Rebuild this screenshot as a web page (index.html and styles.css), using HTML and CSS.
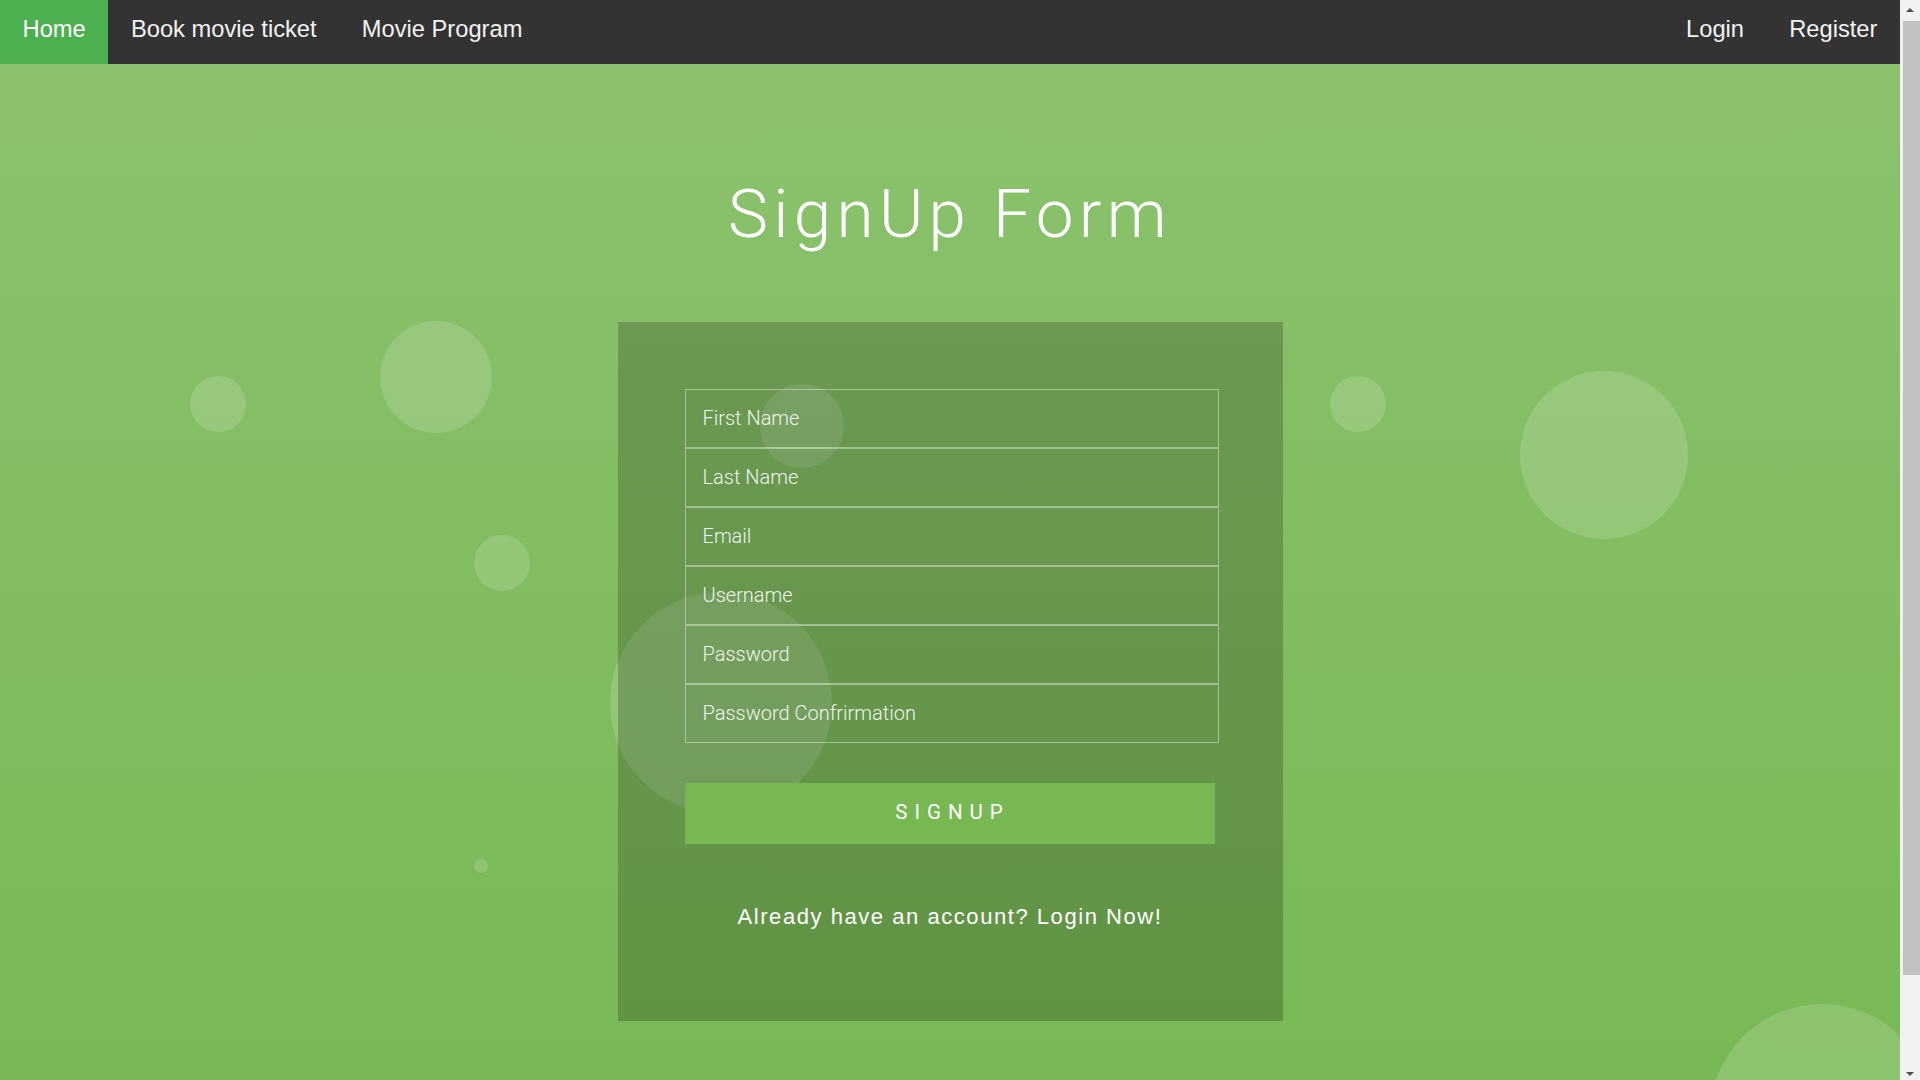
FILE: index.html
```html
<!DOCTYPE html>
<html lang="en">
<head>
<meta charset="utf-8">
<title>SignUp Form</title>
<link rel="stylesheet" href="styles.css">
</head>
<body>
<div class="viewport">
  <div class="doc">
    <nav class="topnav">
      <a class="nav-link active" href="#">Home</a>
      <a class="nav-link" href="#">Book movie ticket</a>
      <a class="nav-link" href="#">Movie Program</a>
      <div class="nav-right">
        <a class="nav-link" href="#">Login</a>
        <a class="nav-link" href="#">Register</a>
      </div>
    </nav>
    <main class="page">
      <ul class="bubbles">
        <li class="bubble b1"></li>
        <li class="bubble b2"></li>
        <li class="bubble b3"></li>
        <li class="bubble b4"></li>
        <li class="bubble b5"></li>
        <li class="bubble b6"></li>
        <li class="bubble b7"></li>
        <li class="bubble b8"></li>
        <li class="bubble b9"></li>
      </ul>
      <h1 class="title">SignUp Form</h1>
      <form class="card">
        <div class="fields">
          <input class="field" type="text" placeholder="First Name">
          <input class="field" type="text" placeholder="Last Name">
          <input class="field" type="text" placeholder="Email">
          <input class="field" type="text" placeholder="Username">
          <input class="field" type="password" placeholder="Password">
          <input class="field" type="password" placeholder="Password Confrirmation">
        </div>
        <button class="btn" type="button">SIGNUP</button>
        <p class="switch">Already have an account? Login Now!</p>
      </form>
    </main>
  </div>
</div>
<div class="scrollbar" aria-hidden="true">
  <span class="sb-arrow sb-up"></span>
  <span class="sb-track"><span class="sb-thumb"></span></span>
  <span class="sb-arrow sb-down"></span>
</div>
</body>
</html>
```

FILE: styles.css
```css
html, body {
  margin: 0;
  padding: 0;
}

html {
  overflow: hidden;
}

body {
  display: flex;
  height: 1080px;
  overflow: hidden;
  font-family: "Liberation Sans", Arial, sans-serif;
}

.viewport {
  flex: 1;
  min-width: 0;
  overflow: hidden;
}

.doc {
  min-height: 1184px;
  background: linear-gradient(to top, #76b852, #8dc26f);
}

/* browser-like scrollbar */
.scrollbar {
  width: 20px;
  flex: none;
  display: flex;
  flex-direction: column;
  align-items: center;
  background: #f1f1f1;
}

.sb-arrow {
  flex: none;
  height: 17px;
  width: 20px;
  display: flex;
  align-items: center;
  justify-content: center;
}

.sb-arrow::before {
  content: "";
  width: 0;
  height: 0;
  border-left: 4px solid transparent;
  border-right: 4px solid transparent;
}

.sb-up::before {
  border-bottom: 4px solid #505050;
  margin-top: 2px;
}

.sb-down::before {
  border-top: 4px solid #505050;
  margin-bottom: -4px;
}

.sb-track {
  flex: 1;
  width: 20px;
  display: flex;
  justify-content: center;
  padding-top: 4px;
}

.sb-thumb {
  width: 17px;
  height: 954px;
  margin-left: 2px;
  background: #c1c1c1;
}

/* navigation */
.topnav {
  display: flex;
  height: 64px;
  background: #333333;
}

.nav-link {
  display: block;
  box-sizing: border-box;
  height: 64px;
  padding: 16px 22.6px 0;
  font-size: 23.7px;
  line-height: 26px;
  color: #f2f2f2;
  text-decoration: none;
}

.nav-link.active {
  background: #4caf50;
  color: #ffffff;
}

.nav-right {
  margin-left: auto;
  display: flex;
}

/* page */
.page {
  position: relative;
  display: flex;
  flex-direction: column;
  align-items: center;
  padding-bottom: 163px;
}

.bubbles {
  position: absolute;
  inset: 0;
  margin: 0;
  padding: 0;
  list-style: none;
  overflow: hidden;
  z-index: 0;
}

.bubble {
  position: absolute;
  border-radius: 50%;
  background: rgba(255, 255, 255, 0.15);
}

.b1 { left: 190px; top: 312px; width: 56px; height: 56px; }
.b2 { left: 380px; top: 257px; width: 112px; height: 112px; }
.b3 { left: 474px; top: 471px; width: 56px; height: 56px; }
.b4 { left: 760px; top: 320px; width: 84px; height: 84px; }
.b5 { left: 610px; top: 528px; width: 222px; height: 222px; }
.b6 { left: 474px; top: 795px; width: 14px; height: 14px; }
.b7 { left: 1330px; top: 312px; width: 56px; height: 56px; }
.b8 { left: 1520px; top: 307px; width: 168px; height: 168px; }
.b9 { left: 1710px; top: 940px; width: 224px; height: 224px; }

.title {
  position: relative;
  z-index: 1;
  margin: 110px 0 68px;
  font-family: Roboto, "Liberation Sans", sans-serif;
  font-weight: 300;
  font-size: 67.5px;
  line-height: 80px;
  letter-spacing: 5.3px;
  color: #ffffff;
}

.card {
  position: relative;
  z-index: 1;
  box-sizing: border-box;
  width: 665px;
  height: 699px;
  padding: 67px 64px 0 67px;
  background: rgba(0, 0, 0, 0.2);
  display: flex;
  flex-direction: column;
  align-items: flex-start;
}

.fields {
  display: flex;
  flex-direction: column;
  width: 534px;
}

.field {
  box-sizing: border-box;
  width: 534px;
  height: 59px;
  margin: 0;
  padding: 0 16px 2px 17px;
  border: 1px solid rgba(255, 255, 255, 0.4);
  background: transparent;
  font-family: Roboto, "Liberation Sans", sans-serif;
  font-weight: 300;
  font-size: 20px;
  color: #ffffff;
  outline: none;
}

.field::placeholder {
  color: rgba(255, 255, 255, 0.92);
}

.btn {
  box-sizing: border-box;
  width: 530px;
  height: 61px;
  margin-top: 40px;
  border: 0;
  padding: 0 0 4px 6px;
  background: #77b853;
  font-family: Roboto, "Liberation Sans", sans-serif;
  font-weight: 400;
  font-size: 20.5px;
  letter-spacing: 7px;
  color: #ffffff;
}

.switch {
  align-self: stretch;
  margin: 60px 0 0 -3px;
  text-align: center;
  font-family: "Liberation Sans", Arial, sans-serif;
  font-size: 22px;
  line-height: 26px;
  letter-spacing: 1.55px;
  color: #ffffff;
}
```
